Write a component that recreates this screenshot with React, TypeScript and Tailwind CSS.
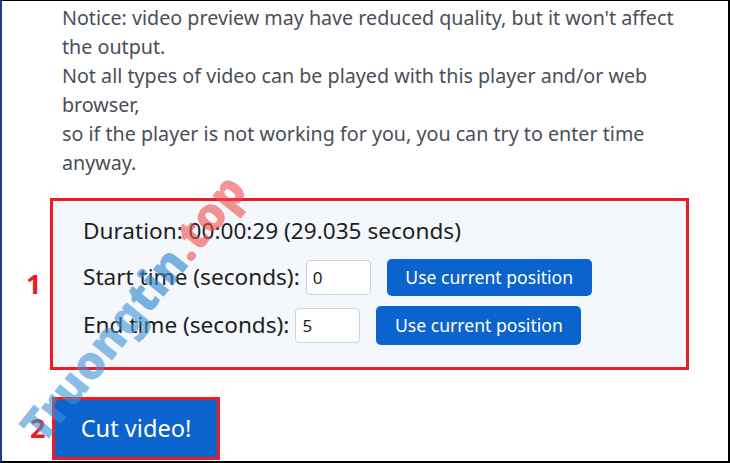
import React from 'react';

const font = { fontFamily: '"Noto Sans", "Open Sans", sans-serif' };

export default function App() {
  return (
    <div
      className="relative w-[730px] h-[463px] overflow-hidden bg-white border-t border-t-black border-l-2 border-l-[#1f3c88] border-r-2 border-r-black border-b-2 border-b-black"
      style={font}
    >
      {/* Notice */}
      <div className="pl-[60px] pt-[2px] text-[19.7px] leading-[29px] text-[#4a4f57] whitespace-nowrap">
        Notice: video preview may have reduced quality, but it won't affect
        <br />
        the output.
        <br />
        Not all types of video can be played with this player and/or web
        <br />
        browser,
        <br />
        so if the player is not working for you, you can try to enter time
        <br />
        anyway.
      </div>

      {/* Step 1 */}
      <div className="flex items-center mt-[21px]">
        <span className="w-[48px] pl-[24px] text-[27px] font-bold text-[#ed1c24]">1</span>
        <div className="w-[639px] h-[172px] border-[3px] border-[#ed1c24] bg-[#f4f7fb] pl-[30px] pt-[14px] text-[#1d1f22]">
          <div className="text-[22.6px] leading-[32px] whitespace-nowrap">
            Duration: 00:00:29 (29.035 seconds)
          </div>
          <div className="flex items-center h-[40px] mt-[10px] text-[22.6px] whitespace-nowrap">
            <span>Start time (seconds):</span>
            <input
              defaultValue="0"
              className="ml-[6px] w-[65px] h-[35px] px-[6px] bg-white border border-[#ced4da] rounded-[4px] text-[17px] outline-none"
              style={font}
            />
            <button className="ml-[16px] w-[205px] h-[37px] rounded-[5px] bg-[#0b63ce] text-white text-[17.6px]">
              Use current position
            </button>
          </div>
          <div className="flex items-center h-[40px] mt-[8px] text-[22.6px] whitespace-nowrap">
            <span>End time (seconds):</span>
            <input
              defaultValue="5"
              className="ml-[6px] w-[65px] h-[35px] px-[6px] bg-white border border-[#ced4da] rounded-[4px] text-[17px] outline-none"
              style={font}
            />
            <button className="ml-[16px] w-[205px] h-[39px] rounded-[5px] bg-[#0b63ce] text-white text-[17.6px]">
              Use current position
            </button>
          </div>
        </div>
      </div>

      {/* Step 2 */}
      <div className="flex items-center mt-[27px]">
        <span className="w-[50px] pl-[28px] text-[27px] font-bold text-[#ed1c24]">2</span>
        <div className="border-[3px] border-[#ed1c24]">
          <button className="w-[162px] h-[57px] bg-[#0b63ce] text-white text-[23.6px]">Cut video!</button>
        </div>
      </div>

      {/* Watermark */}
      <div className="absolute left-[130px] top-[306px] -translate-x-1/2 -translate-y-1/2 rotate-[-51deg] whitespace-nowrap text-[46px] font-black leading-none pointer-events-none">
        <span className="text-[#3d92d6]/60">Truong</span>
        <span className="text-[#2f86cf]/65">tin</span>
        <span className="text-[#ee4c4c]/60">.top</span>
      </div>
    </div>
  );
}
